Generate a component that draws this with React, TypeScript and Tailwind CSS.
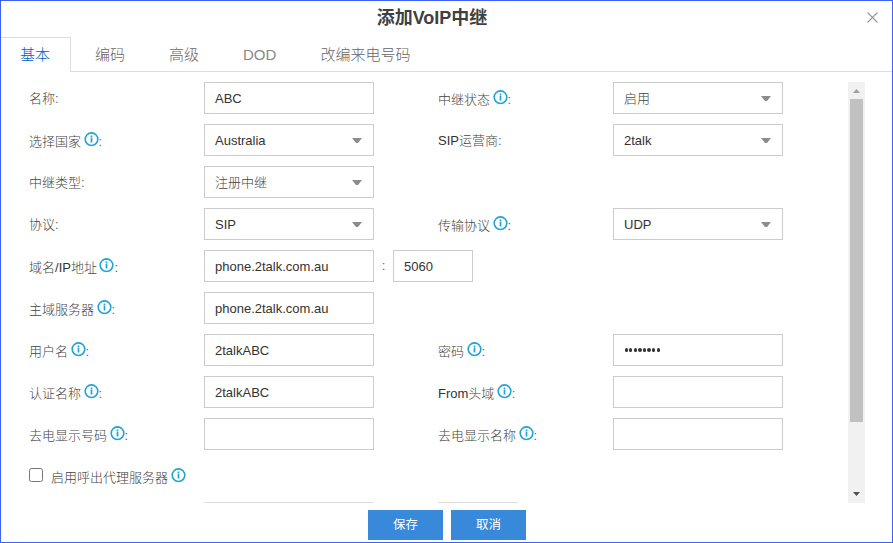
import type { ReactNode } from "react";

function Info() {
  return (
    <svg className="ml-[2.5px] -mt-[5px] h-[15px] w-[15px] shrink-0" viewBox="0 0 15 15" fill="none">
      <circle cx="7.5" cy="7.2" r="6.3" stroke="#22a3d2" strokeWidth="1.6" />
      <path d="M7.5 3.6v1.3M7.5 5.4v5.2" stroke="#22a3d2" strokeWidth="1.7" />
    </svg>
  );
}

function Label({ children, info }: { children: ReactNode; info?: boolean }) {
  return (
    <div
      className={`flex h-8 w-[175px] shrink-0 items-center whitespace-nowrap ${info ? "pt-[3px]" : "pt-0.5"}`}
    >
      <span>{children}</span>
      {info && <Info />}
      <span className="text-[#666]">:</span>
    </div>
  );
}

function Latin({ children }: { children: ReactNode }) {
  return <span className="font-normal text-[#333]">{children}</span>;
}

function Field({ value, select, cjk, small }: { value?: string; select?: boolean; cjk?: boolean; small?: boolean }) {
  return (
    <div
      className={`flex h-8 shrink-0 items-center justify-between border border-[#ccc] bg-white pr-[11px] pl-[10px] whitespace-nowrap ${small ? "w-20" : "w-[170px]"} ${cjk ? "font-light text-[#444]" : "font-normal text-[#333]"}`}
    >
      <span className="pt-0.5">{value}</span>
      {select && (
        <svg className="h-[5px] w-[10px]" viewBox="0 0 10 5">
          <path d="M0 0h10L6 5H4z" fill="#8c8c8c" />
        </svg>
      )}
    </div>
  );
}

function Row({ left, right }: { left: ReactNode; right?: ReactNode }) {
  return (
    <div className="flex h-[42px]">
      <div className="flex w-[409px] shrink-0">{left}</div>
      {right && <div className="flex">{right}</div>}
    </div>
  );
}

const tabs = [
  { name: "编码", style: "ml-6 text-[#666]" },
  { name: "高级", style: "ml-11 text-[#666]" },
  { name: "DOD", style: "ml-11 font-normal text-[#888]" },
  { name: "改编来电号码", style: "ml-11 text-[#666]" },
];

export default function App() {
  return (
    <div className="flex h-[543px] w-[893px] flex-col border border-[#4060f5] bg-white font-['Liberation_Sans','Noto_Sans_CJK_SC',sans-serif] text-[13px] leading-[18px] font-light text-[#444]">
      <header className="flex h-9 shrink-0 items-start">
        <h1 className="flex-1 pt-[5px] pr-px text-center text-[18px] leading-6 font-bold text-[#404040]">
          添加VoIP中继
        </h1>
        <button className="mt-[11px] mr-[14px] ml-[3px] h-[11px] w-[11px]" aria-label="关闭">
          <svg viewBox="0 0 11 11" className="h-[11px] w-[11px]">
            <path d="M.5.5l10 10M10.5.5l-10 10" stroke="#999" strokeWidth="1.1" />
          </svg>
        </button>
      </header>

      <nav className="flex h-[35px] shrink-0 text-[15px] leading-[34px]">
        <div className="w-[70px] border-t border-r border-[#ddd] pl-[19px] text-[#0060c0]">基本</div>
        <div className="flex flex-1 border-b border-[#ddd]">
          {tabs.map((t) => (
            <div key={t.name} className={`${t.style} pt-px`}>
              {t.name}
            </div>
          ))}
        </div>
      </nav>

      <main className="mt-[10px] flex h-[421px] shrink-0 overflow-hidden pl-7">
        <div className="w-[819px] shrink-0">
          <Row
            left={<><Label>名称</Label><Field value="ABC" /></>}
            right={<><Label info>中继状态</Label><Field value="启用" select cjk /></>}
          />
          <Row
            left={<><Label info>选择国家</Label><Field value="Australia" select /></>}
            right={<><Label><Latin>SIP</Latin>运营商</Label><Field value="2talk" select /></>}
          />
          <Row left={<><Label>中继类型</Label><Field value="注册中继" select cjk /></>} />
          <Row
            left={<><Label>协议</Label><Field value="SIP" select /></>}
            right={<><Label info>传输协议</Label><Field value="UDP" select /></>}
          />
          <Row
            left={
              <>
                <Label info>域名<Latin>/IP</Latin>地址</Label>
                <Field value="phone.2talk.com.au" />
                <span className="w-[19px] shrink-0 pt-[7px] text-center text-[#666]">:</span>
                <Field value="5060" small />
              </>
            }
          />
          <Row left={<><Label info>主域服务器</Label><Field value="phone.2talk.com.au" /></>} />
          <Row
            left={<><Label info>用户名</Label><Field value="2talkABC" /></>}
            right={
              <>
                <Label info>密码</Label>
                <div className="flex h-8 w-[170px] items-center gap-[1.3px] border border-[#ccc] pl-[10.5px]">
                  {Array.from({ length: 8 }, (_, i) => (
                    <i key={i} className="h-[3.3px] w-[3.3px] rounded-full bg-[#333]" />
                  ))}
                </div>
              </>
            }
          />
          <Row
            left={<><Label info>认证名称</Label><Field value="2talkABC" /></>}
            right={<><Label info><Latin>From</Latin>头域</Label><Field /></>}
          />
          <Row
            left={<><Label info>去电显示号码</Label><Field /></>}
            right={<><Label info>去电显示名称</Label><Field /></>}
          />
          <div className="flex h-[42px] items-start">
            <span className="mt-[8px] mr-2 h-[14px] w-[14px] rounded-[2.5px] border border-[#777]" />
            <div className="flex h-8 items-center pt-[3px]">
              启用呼出代理服务器
              <Info />
            </div>
          </div>
          <div className="flex pl-[175px]">
            <div className="h-8 w-[170px] border border-[#ddd]" />
            <div className="ml-16 h-8 w-20 border border-[#ddd]" />
          </div>
        </div>
        <div className="flex w-[17px] flex-col items-center bg-[#f1f1f1]">
          <svg className="mt-[7px] h-1 w-[7px] shrink-0" viewBox="0 0 7 4">
            <path d="M0 4h7L3.5 0z" fill="#a0a0a0" />
          </svg>
          <div className="mt-[6px] h-[323px] w-[13px] shrink-0 bg-[#c1c1c1]" />
          <svg className="mt-[70px] h-1 w-[7px] shrink-0" viewBox="0 0 7 4">
            <path d="M0 0h7L3.5 4z" fill="#505050" />
          </svg>
        </div>
      </main>

      <footer className="mt-[7px] flex gap-2 pl-[367px] text-[12.5px] font-normal text-white">
        <button className="h-[30px] w-[75px] bg-[#3889d9]">保存</button>
        <button className="h-[30px] w-[75px] bg-[#3889d9]">取消</button>
      </footer>
    </div>
  );
}
